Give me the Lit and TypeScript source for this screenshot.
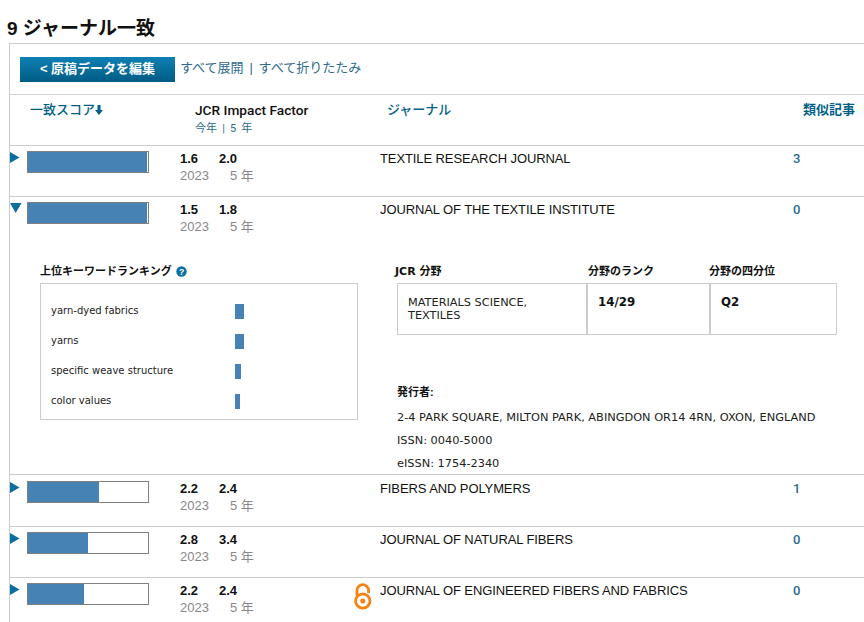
import { LitElement, html, css } from "lit";
import { customElement } from "lit/decorators.js";

const ROWS = [
  { a: "1.6", b: "2.0", w: 118.6, t: "TEXTILE RESEARCH JOURNAL", n: "3", open: true, oa: false, tall: false, detail: false },
  { a: "1.5", b: "1.8", w: 118.6, t: "JOURNAL OF THE TEXTILE INSTITUTE", n: "0", open: false, oa: false, tall: false, detail: true },
  { a: "2.2", b: "2.4", w: 71, t: "FIBERS AND POLYMERS", n: "1", open: true, oa: false, tall: true, detail: false },
  { a: "2.8", b: "3.4", w: 60, t: "JOURNAL OF NATURAL FIBERS", n: "0", open: true, oa: false, tall: false, detail: false },
  { a: "2.2", b: "2.4", w: 56, t: "JOURNAL OF ENGINEERED FIBERS AND FABRICS", n: "0", open: true, oa: true, tall: false, detail: false },
];
const KEYWORDS = [
  { k: "yarn-dyed fabrics", w: 9 },
  { k: "yarns", w: 9 },
  { k: "specific weave structure", w: 6 },
  { k: "color values", w: 5 },
];

@customElement("app-root")
export class AppRoot extends LitElement {
  static styles = css`
    :host { display: block; width: 864px; height: 622px; overflow: hidden; background: #fff; color: #000;
      font-family: "Liberation Sans", "Noto Sans CJK JP", sans-serif; }
    * { box-sizing: border-box; }
    h1 { margin: 0; height: 43px; padding: 18px 0 0 7px; font-size: 19px; line-height: 22px; font-weight: 700; color: #111; }
    .panel { margin-left: 9px; width: 900px; border-left: 1px solid #ccc; border-top: 1px solid #ccc; }
    .toolbar { height: 51px; padding: 13px 0 0 10px; display: flex; align-items: flex-start; border-bottom: 1px solid #d4d4d4; }
    .btn { width: 155px; height: 25px; display: flex; align-items: center; justify-content: center; padding-bottom: 4px;
      background: linear-gradient(#0e80b3, #005c85); color: #fff; font-size: 13px; font-weight: 700; }
    .links { margin-left: 5px; font-size: 13px; line-height: 22px; color: #2f6b8c; height: 22px; word-spacing: 2.2px; }
    .grid { display: grid; grid-template-columns: 17px 153px 174px 26px 414px 1fr; align-items: start; }
    .head { height: 50px; padding-top: 5px; font-size: 13px; }
    .head .h-score { grid-column: 1 / span 2; padding-left: 20px; line-height: 20px; color: #005f87; font-weight: 500; display: flex; align-items: center; }
    .head .h-jcr { padding-left: 15px; line-height: 20px; color: #111; grid-column: 3; font-family: Roboto, "Noto Sans CJK JP", sans-serif; font-weight: 500; font-size: 13.7px; }
    .head .h-sub { margin-top: 2px; font-size: 11px; line-height: 14px; color: #2f6b8c; font-weight: 400; word-spacing: 2.4px; }
    .head .h-j { grid-column: 4 / span 2; padding-left: 33px; line-height: 20px; color: #005f87; font-weight: 500; }
    .head .h-s { padding-left: 9px; line-height: 20px; color: #005f87; font-weight: 700; font-size: 13px; }
    .row { border-top: 1px solid #ccc; height: 51px; padding-top: 5px; font-size: 13px; }
    .row.tall { height: 52px; padding-top: 6px; }
    .arrow { display: block; margin-top: 1px; }
    .bar { width: 122px; height: 22px; border: 1px solid #808080; background: #fff; }
    .fill { height: 100%; background: #4682b4; }
    .nums { line-height: 17px; margin-top: -1px; }
    .nums .v { display: flex; font-weight: 700; color: #111; height: 17px; }
    .nums .v span:first-child { width: 39px; }
    .nums .y { display: flex; color: #888; height: 17px; }
    .nums .y span:first-child { width: 50px; }
    .title { line-height: 14px; color: #111; letter-spacing: -0.1px; padding-top: 1px; }
    .count { font-family: Roboto, sans-serif; font-weight: 500; color: #2a6b90; line-height: 14px; margin-left: -1px; padding-top: 1px; }
    .detail { height: 227px; display: grid; grid-template-columns: 386px 1fr; }
    .kw { padding: 17px 0 0 30px; }
    .sub-title { font-size: 11px; font-weight: 700; line-height: 14px; color: #111; display: flex; align-items: center; gap: 4px; }
    .kw-box { margin-top: 5px; width: 318px; height: 137px; border: 1px solid #ccc; padding: 11px 0 0 10px; }
    .kw-row { display: flex; align-items: center; height: 30px; font-family: "DejaVu Sans", "Liberation Sans", sans-serif; font-size: 10px; color: #222; }
    .kw-row .name { width: 184px; }
    .kw-row .b { height: 15px; background: #4682b4; margin-top: 2px; }
    .info { padding: 18px 0 0 1px; }
    .cols { display: grid; grid-template-columns: 191px 121px 1fr; width: 440px; font-size: 11px; font-weight: 700; line-height: 14px; color: #111;
      font-family: "DejaVu Sans", "Noto Sans CJK JP", sans-serif; }
    .cols span:first-child { margin-left: -2px; }
    .jt { margin-top: 4px; display: grid; grid-template-columns: 190px 123px 127px; width: 440px; height: 52px; }
    .jt div { border: 1px solid #ccc; font-family: "DejaVu Sans", sans-serif; font-size: 11.3px; line-height: 13px; padding: 12px 30px 0 10px; color: #222; }
    .jt div + div { border-left-width: 2px; margin-left: -1px; padding-right: 10px; }
    .jt .bold { font-weight: 700; color: #111; font-size: 11.8px; }
    .pub { margin-top: 50px; font-size: 11px; font-weight: 700; line-height: 14px; color: #111; height: 14px; }
    .line { font-family: "DejaVu Sans", sans-serif; font-size: 11.34px; line-height: 23px; color: #222; height: 23px; white-space: nowrap; }
    .pub + .line { margin-top: 7px; }
  `;

  private tri(open: boolean) {
    return open
      ? html`<svg class="arrow" width="10" height="11" viewBox="0 0 10 11"><path d="M0 0L9.5 5.5L0 11Z" fill="#0a6f9e"/></svg>`
      : html`<svg class="arrow" width="12" height="10" viewBox="0 0 12 10"><path d="M0 0H11.5L5.7 10Z" fill="#0a6f9e"/></svg>`;
  }

  private lock() {
    return html`<svg width="18" height="27" viewBox="0 0 18 27">
      <path d="M3 13V7.5a5.8 5.8 0 0 1 11.6 0V10" fill="none" stroke="#f68212" stroke-width="2.8"/>
      <circle cx="8.8" cy="18" r="7.2" fill="none" stroke="#f68212" stroke-width="2.8"/>
      <circle cx="8.8" cy="18" r="2.5" fill="#f68212"/>
    </svg>`;
  }

  render() {
    return html`
      <h1>9 ジャーナル一致</h1>
      <div class="panel">
        <div class="toolbar">
          <div class="btn">&lt; 原稿データを編集</div>
          <div class="links">すべて展開 | すべて折りたたみ</div>
        </div>
        <div class="grid head">
          <div class="h-score">一致スコア<svg width="8" height="10" viewBox="0 0 8 10"><path d="M2.5 0H5.5V5H8L4 10L0 5H2.5Z" fill="#005f87"/></svg></div>
          <div class="h-jcr">JCR Impact Factor<div class="h-sub">今年 | 5 年</div></div>
          <div class="h-j">ジャーナル</div>
          <div class="h-s">類似記事</div>
        </div>
        ${ROWS.map((r) => html`
          <div class="grid row ${r.tall ? "tall" : ""}">
            <div>${this.tri(r.open)}</div>
            <div><div class="bar"><div class="fill" style="width:${r.w}px"></div></div></div>
            <div class="nums">
              <div class="v"><span>${r.a}</span><span>${r.b}</span></div>
              <div class="y"><span>2023</span><span>5 年</span></div>
            </div>
            <div>${r.oa ? this.lock() : ""}</div>
            <div class="title">${r.t}</div>
            <div class="count">${r.n}</div>
          </div>
          ${r.detail ? html`
            <div class="detail">
              <div class="kw">
                <div class="sub-title">上位キーワードランキング
                  <svg width="11" height="11" viewBox="0 0 11 11"><circle cx="5.5" cy="5.5" r="5.2" fill="#0d6f9f"/><text x="5.5" y="8.6" font-size="8.5" font-weight="700" text-anchor="middle" fill="#fff" font-family="Liberation Sans">?</text></svg>
                </div>
                <div class="kw-box">
                  ${KEYWORDS.map((k) => html`<div class="kw-row"><span class="name">${k.k}</span><span class="b" style="width:${k.w}px"></span></div>`)}
                </div>
              </div>
              <div class="info">
                <div class="cols"><span>JCR 分野</span><span>分野のランク</span><span>分野の四分位</span></div>
                <div class="jt"><div>MATERIALS SCIENCE, TEXTILES</div><div class="bold">14/29</div><div class="bold">Q2</div></div>
                <div class="pub">発行者:</div>
                <div class="line">2-4 PARK SQUARE, MILTON PARK, ABINGDON OR14 4RN, OXON, ENGLAND</div>
                <div class="line">ISSN: 0040-5000</div>
                <div class="line">eISSN: 1754-2340</div>
              </div>
            </div>` : ""}
        `)}
      </div>
    `;
  }
}
